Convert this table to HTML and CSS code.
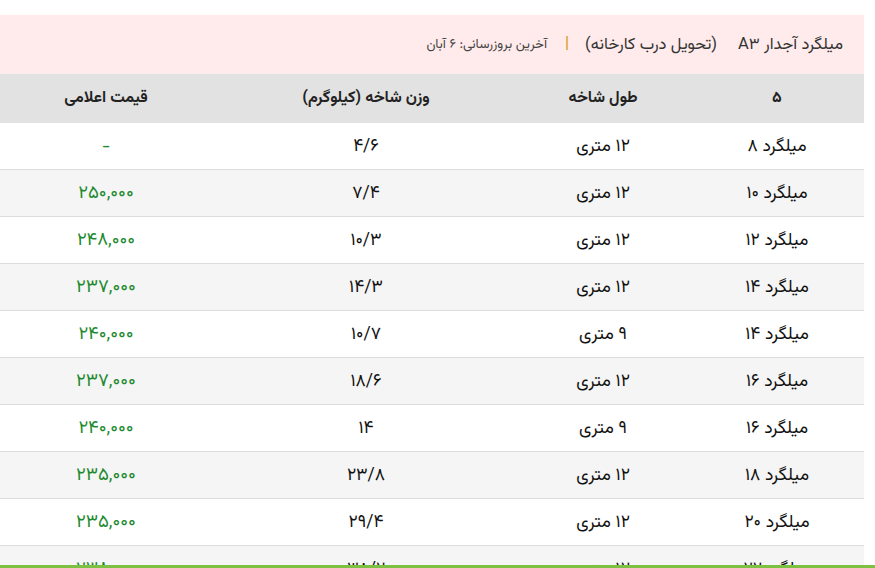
FILE: index.html
```html
<!DOCTYPE html>
<html lang="fa" dir="rtl">
<head>
<meta charset="utf-8">
<title>قیمت میلگرد</title>
<link rel="stylesheet" href="styles.css">
</head>
<body>
<div class="wrap">
  <div class="title-bar">
    <span class="title">میلگرد آجدار A۳</span>
    <span class="note">(تحویل درب کارخانه)</span>
    <span class="sep">|</span>
    <span class="update">آخرین بروزرسانی: ۶ آبان</span>
  </div>
  <table class="prices">
    <colgroup>
      <col class="c1"><col class="c2"><col class="c3"><col class="c4">
    </colgroup>
    <thead>
      <tr><th>۵</th><th>طول شاخه</th><th>وزن شاخه (کیلوگرم)</th><th class="pc">قیمت اعلامی</th></tr>
    </thead>
    <tbody>
      <tr><td>میلگرد ۸</td><td>۱۲ متری</td><td>۴/۶</td><td class="price">-</td></tr>
      <tr><td>میلگرد ۱۰</td><td>۱۲ متری</td><td>۷/۴</td><td class="price">۲۵۰,۰۰۰</td></tr>
      <tr><td>میلگرد ۱۲</td><td>۱۲ متری</td><td>۱۰/۳</td><td class="price">۲۴۸,۰۰۰</td></tr>
      <tr><td>میلگرد ۱۴</td><td>۱۲ متری</td><td>۱۴/۳</td><td class="price">۲۳۷,۰۰۰</td></tr>
      <tr><td>میلگرد ۱۴</td><td>۹ متری</td><td>۱۰/۷</td><td class="price">۲۴۰,۰۰۰</td></tr>
      <tr><td>میلگرد ۱۶</td><td>۱۲ متری</td><td>۱۸/۶</td><td class="price">۲۳۷,۰۰۰</td></tr>
      <tr><td>میلگرد ۱۶</td><td>۹ متری</td><td>۱۴</td><td class="price">۲۴۰,۰۰۰</td></tr>
      <tr><td>میلگرد ۱۸</td><td>۱۲ متری</td><td>۲۳/۸</td><td class="price">۲۳۵,۰۰۰</td></tr>
      <tr><td>میلگرد ۲۰</td><td>۱۲ متری</td><td>۲۹/۴</td><td class="price">۲۳۵,۰۰۰</td></tr>
      <tr><td>میلگرد ۲۲</td><td>۱۲ متری</td><td>۳۸/۲</td><td class="price">۲۳۸,۰۰۰</td></tr>
    </tbody>
  </table>
</div>
<div class="bottom-line"></div>
</body>
</html>
```
FILE: styles.css
```css
html, body {
  margin: 0;
  padding: 0;
  background: #ffffff;
}
body {
  font-family: "Vazirmatn", "Vazir", "Noto Sans Arabic UI", "Noto Sans Arabic", "DejaVu Sans", sans-serif;
  color: #222;
  overflow: hidden;
  height: 568px;
}
.wrap {
  width: 864px;
  margin: 15px 11px 0 0;
}
.title-bar {
  background: #ffebeb;
  height: 59px;
  display: flex;
  align-items: center;
  padding: 0 21px 0 0;
  box-sizing: border-box;
}
.title {
  font-size: 16.5px;
  color: #333;
}
.note {
  font-size: 16.5px;
  color: #333;
  margin-right: 21px;
}
.sep {
  font-size: 16px;
  font-weight: bold;
  color: #d79b1e;
  margin-right: 16px;
}
.update {
  font-size: 13.3px;
  color: #444;
  margin-right: 18px;
}
.prices {
  width: 864px;
  border-collapse: collapse;
  table-layout: fixed;
}
.c1 { width: 174px; }
.c2 { width: 174px; }
.c3 { width: 300px; }
.c4 { width: 216px; }
.prices th {
  background: #e2e2e2;
  height: 49px;
  font-size: 16px;
  font-weight: bold;
  color: #222;
  text-align: center;
  padding: 0;
}
.prices td {
  height: 46px;
  font-size: 17.5px;
  color: #111;
  text-align: center;
  padding: 0;
  border-bottom: 1px solid #dcdcdc;
}
.prices tbody tr:nth-child(even) td {
  background: #f5f5f5;
}
.prices th.pc,
.prices td.price {
  padding-right: 4px;
}
.prices td.price {
  color: #1d8a2f;
  font-size: 18.5px;
  font-weight: 400;
}
.bottom-line {
  position: fixed;
  left: 0;
  right: 0;
  bottom: 0;
  height: 3px;
  background: #7cc142;
}
```
